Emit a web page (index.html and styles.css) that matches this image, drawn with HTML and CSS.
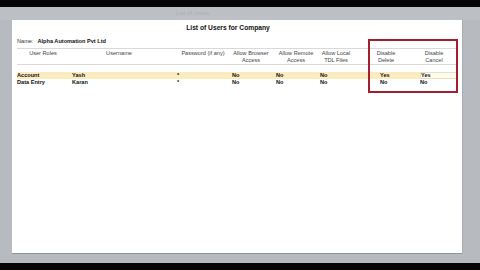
FILE: index.html
```html
<!DOCTYPE html>
<html>
<head>
<meta charset="utf-8">
<link rel="stylesheet" href="styles.css">
</head>
<body>
<div class="screen">
  <div class="blackbar"></div>
  <div class="stage">
    <div class="strip"><span class="strip-text">List of Users</span></div>
    <div class="panel">
      <div class="title">List of Users for Company</div>
      <div class="name-row"><span class="name-label">Name:</span><span class="name-value">Alpha Automation Pvt Ltd</span></div>
      <div class="head">
        <div class="hcell"><span>User Roles</span></div>
        <div class="hcell"><span>Username</span></div>
        <div class="hcell"><span>Password (if any)</span></div>
        <div class="hcell"><span>Allow Browser<br>Access</span></div>
        <div class="hcell"><span>Allow Remote<br>Access</span></div>
        <div class="hcell"><span>Allow Local<br>TDL Files</span></div>
        <div class="hcell"><span>Disable<br>Delete</span></div>
        <div class="hcell"><span>Disable<br>Cancel</span></div>
      </div>
      <div class="rows">
        <div class="row selected">
          <div>Account</div><div>Yash</div><div>*</div><div>No</div><div>No</div><div>No</div><div>Yes</div><div class="cur">Yes</div>
        </div>
        <div class="row">
          <div>Data Entry</div><div>Karan</div><div>*</div><div>No</div><div>No</div><div>No</div><div>No</div><div>No</div>
        </div>
      </div>
      <div class="highlight-box"></div>
    </div>
  </div>
  <div class="blackbar"></div>
</div>
</body>
</html>
```
FILE: styles.css
```css
* { box-sizing: border-box; }
html, body { margin: 0; padding: 0; }
body {
  width: 480px;
  height: 270px;
  overflow: hidden;
  background: #000;
  font-family: "Liberation Sans", Arial, sans-serif;
}
.screen {
  display: flex;
  flex-direction: column;
  height: 270px;
}
.blackbar {
  height: 7px;
  background: #050505;
  flex: none;
}
.stage {
  flex: 1;
  background: #b7bbbf;
  padding: 0 18px 9px 12px;
  display: flex;
  flex-direction: column;
}
.strip {
  height: 13px;
  margin: 0 -18px 0 -12px;
  padding-left: 176px;
  background: #bcc0c4;
  font-size: 6px;
  line-height: 13px;
  color: #aab0b8;
}
.panel {
  position: relative;
  flex: 1;
  background: #fff;
  border-bottom: 1px solid #8f9499;
  box-shadow: 1px 0 0 #a9adb2;
  color: #111;
}
.title {
  height: 15px;
  line-height: 16px;
  font-size: 6.7px;
  font-weight: bold;
  text-align: center;
  padding-right: 18px;
}
.name-row {
  height: 14px;
  line-height: 13px;
  margin: 0 4px 0 5px;
  font-size: 5.6px;
  border-bottom: 1px solid #d9d9d9;
}
.name-label { color: #333; margin-right: 4px; }
.name-value { font-weight: bold; }
.head {
  display: grid;
  grid-template-columns: 52px 100px 68px 28px 62px 18px 82px 14px;
  margin: 0 4px 0 5px;
  padding-top: 1px;
  height: 16px;
  border-bottom: 1px solid #d9d9d9;
  font-size: 5.6px;
  line-height: 7px;
  color: #444;
}
.hcell {
  display: flex;
  justify-content: center;
  white-space: nowrap;
}
.hcell span {
  flex: none;
  text-align: center;
}
.rows {
  margin: 7px 4px 0 5px;
}
.row {
  display: grid;
  grid-template-columns: 55px 105px 55px 44px 44px 60px 40px 38px;
  height: 7px;
  line-height: 7px;
  font-size: 5.6px;
  font-weight: bold;
}
.row.selected { background: #fbebc1; }
.row .cur {
  background: #fffaee;
  border: 1px solid #eadfc2;
  line-height: 5px;
}
.highlight-box {
  position: absolute;
  left: 356px;
  top: 19px;
  width: 90px;
  height: 54px;
  border: 2px solid #a31f2d;
}
```
